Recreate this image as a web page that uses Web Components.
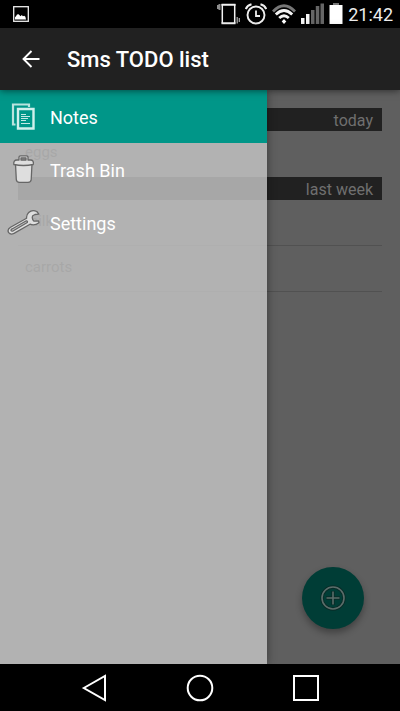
<!DOCTYPE html>
<html lang="en">
<head>
<meta charset="utf-8">
<meta name="viewport" content="width=device-width, initial-scale=1">
<title>Sms TODO list</title>
<style>
  html, body { margin: 0; min-height: 100%; }
  body { font-family: Roboto, "Liberation Sans", sans-serif; background: #000; color: #fff; }
</style>
</head>
<body>
<todo-app></todo-app>
<script>
const define = (name, html) => {
  const template = document.createElement('template');
  template.innerHTML = html;
  customElements.define(name, class extends HTMLElement {
    constructor() {
      super();
      this.attachShadow({ mode: 'open' }).append(template.content.cloneNode(true));
    }
  });
};

define('status-bar', `
<style>
  :host { display: flex; align-items: center; height: 28px; padding: 0 7px 0 12px; background: #000; color: #ededed; }
  svg { display: block; flex: none; }
  .picture { margin-right: auto; }
  .tray { display: flex; align-items: center; gap: 5px; }
  time { font-size: 18px; line-height: 28px; padding-top: 1px; }
</style>
<svg class="picture" width="18" height="28" viewBox="0 0 18 28"><rect x="1.7" y="6.7" width="14.6" height="14.6" fill="none" stroke="#eee" stroke-width="1.3"/><path d="M3 19.5v-2.3l1-.9 1-1.8 1.6-.3 1 1 .9 1 1.3-1.2 1.1 1.2 1.3-.4 1.2.9.6 2.8z" fill="#fff"/></svg>
<div class="tray">
  <svg width="23" height="28" viewBox="0 0 23 28"><path d="M4.500 4.700h14M4.500 23.300h14" stroke="#f2f2f2" stroke-width="2"/><path d="M5.300 4v19.500M17.700 4v19.500" stroke="#f2f2f2" stroke-width="1.500"/><path d="M2.500 4v6M.7 5v4" stroke="#8d8d8d" stroke-width="2"/><path d="M20.200 17v6.500M22.300 18v4" stroke="#a5a5a5" stroke-width="1.300"/></svg>
  <svg width="22" height="28" viewBox="0 0 22 28" fill="none" stroke="#eee"><circle cx="11" cy="15" r="8.500" stroke-width="1.900"/><path d="M11 10.500v5.500h4" stroke-width="1.800"/><path d="M.8 9Q2.300 5.300 6.500 4.200M21.200 9Q19.700 5.300 15.500 4.200" stroke-width="2"/></svg>
  <svg width="24" height="28" viewBox="0 0 24 28" fill="none" stroke-width="2.800"><path d="M1 11.500Q12 0 23 11.500" stroke="#777"/><path d="M3.800 14.500Q12 6.500 20.200 14.500" stroke="#f4f4f4"/><path d="M7.200 18Q12 13.500 16.800 18" stroke="#f4f4f4"/><path d="M12 19l2.300 2.500L12 24l-2.300-2.500z" fill="#fff"/></svg>
  <svg width="23" height="28" viewBox="0 0 23 28"><path d="M0 18h3.500v6H0zM5 14h3.500v10H5z" fill="#f5f5f5"/><path d="M10 10h3.500v14H10zM14.800 6h3.500v18h-3.500zM19.500 3.500H23V24h-3.500z" fill="#666"/></svg>
  <svg width="14" height="28" viewBox="0 0 14 28"><path d="M4 3h6v2H4z" fill="#777"/><path d="M.5 5h13v19H.5z" fill="#fff"/></svg>
  <time>21:42</time>
</div>`);

define('app-bar', `
<style>
  :host { display: flex; align-items: center; height: 62px; padding: 0 16px; background: #212121; box-shadow: 0 1px 7px rgba(0,0,0,.5); position: relative; z-index: 2; box-sizing: border-box; gap: 22px; }
  button { width: 29px; height: 40px; padding: 0; border: 0; background: none; display: grid; place-items: center; }
  h1 { margin: 0; padding-top: 2px; font-size: 22px; line-height: 28px; font-weight: 500; color: #fff; }
</style>
<button aria-label="Back"><svg width="18" height="18" viewBox="0 0 18 18" fill="none" stroke="#fff" stroke-width="1.900"><path d="M17.500 9H1.700M9.500 1L1.500 9l8 8"/></svg></button>
<h1><slot></slot></h1>`);

define('list-header', `
<style>
  :host { display: block; background: #212121; color: #6f6f6f; text-align: right; padding: 2px 9px 0; }
  h2 { margin: 0; font-size: 16px; line-height: 21px; font-weight: 400; }
</style>
<h2><slot></slot></h2>`);

define('todo-row', `
<style>
  :host { display: block; box-sizing: border-box; height: 46px; padding: 11px 7px; border-bottom: 1px solid #515151; font-size: 15px; line-height: 21px; color: #242424; }
  :host([last]) { border-color: transparent; }
</style>
<slot></slot>`);

define('add-button', `
<style>
  :host { display: block; }
  button { width: 62px; height: 62px; padding: 0; border: 0; border-radius: 50%; background: #003d36; display: grid; place-items: center; box-shadow: 0 4px 7px rgba(0,0,0,.32); }
</style>
<button aria-label="Add note"><svg width="26" height="26" viewBox="0 0 26 26" fill="none"><g stroke="#082b27" stroke-width="3.400"><circle cx="13" cy="13" r="11"/><path d="M13 6v14M6 13h14"/></g><g stroke="#5b6d6a" stroke-width="1.600"><circle cx="13" cy="13" r="11"/><path d="M13 6.500v13M6.500 13h13"/></g></svg></button>`);

define('drawer-item', `
<style>
  :host { display: block; }
  a { display: flex; align-items: center; gap: 10px; height: 53px; padding: 0 7px; color: #fff; text-decoration: none; font-size: 18px; line-height: 24px; }
  span { padding-top: 2px; }
  :host([active]) a { background: #009688; }
  ::slotted(svg) { display: block; flex: none; }
</style>
<a href="#"><slot name="icon"></slot><span><slot></slot></span></a>`);

define('nav-bar', `
<style>
  :host { display: flex; justify-content: center; align-items: center; gap: 66px; height: 47px; background: #000; }
  button { width: 40px; height: 40px; padding: 0; border: 0; background: none; display: grid; place-items: center; }
  svg { fill: none; stroke: #fff; stroke-width: 2; }
</style>
<button aria-label="Back"><svg width="28" height="28" viewBox="0 0 28 28"><path d="M3.800 14L25 1.900v24.200z"/></svg></button>
<button aria-label="Home"><svg width="28" height="28" viewBox="0 0 28 28"><circle cx="14" cy="14" r="12.300"/></svg></button>
<button aria-label="Recent apps"><svg width="28" height="28" viewBox="0 0 28 28"><path d="M2 2h24v24H2z"/></svg></button>`);

define('todo-app', `
<style>
  :host { display: grid; grid-template-rows: auto auto 1fr auto; min-height: 100vh; }
  main { display: grid; background: #5f5f5f; overflow: hidden; }
  main > * { grid-area: 1 / 1; }
  .list { padding: 18px; }
  add-button { place-self: end; margin: 0 36px 35px 0; }
  nav { width: 66.750%; background: rgba(196,196,196,.82); box-shadow: 0 0 9px rgba(0,0,0,.4); z-index: 1; clip-path: inset(0 -12px 0 0); }
</style>
<status-bar></status-bar>
<app-bar>Sms TODO list</app-bar>
<main>
  <section class="list">
    <list-header>today</list-header>
    <todo-row last>eggs</todo-row>
    <list-header>last week</list-header>
    <todo-row>milk</todo-row>
    <todo-row>carrots</todo-row>
  </section>
  <add-button></add-button>
  <nav aria-label="Main menu">
    <drawer-item active>
      <svg slot="icon" width="33" height="34" viewBox="0 0 33 34" fill="none"><path d="M8.500 24.500H6V4.500H22V7" stroke="#b9e3de" stroke-width="2.200"/><path d="M11 9h15.500v19.500H11z" stroke="#d0f0ec" stroke-width="2.400"/><path d="M14 14.500h5M14 16.500h9M14 18.500h7M14 20.500h5M14 23.500h9" stroke="#c5e9e5" stroke-width="1.200"/></svg>
      Notes
    </drawer-item>
    <drawer-item>
      <svg slot="icon" width="33" height="34" viewBox="0 0 33 34" fill="#dedede" stroke="#666" stroke-width="1.300" stroke-linejoin="round"><path d="M8.500 11h16.500l-.8 15.500Q24 29.300 21 29.300h-8.500Q9.500 29.300 9.300 26.500z"/><path d="M6.800 11.500Q6.300 7 10 7h2V4Q12 2.800 13.500 2.800h6Q21 2.800 21 4v3h2.500Q27 7 26.300 11.500Q16.500 13.500 6.800 11.500z"/><path d="M14 5h5v2h-5z" fill="#aaa"/></svg>
      Trash Bin
    </drawer-item>
    <drawer-item>
      <svg slot="icon" width="33" height="34" viewBox="0 0 33 34" fill="#dedede" stroke="#666" stroke-width="1.300" stroke-linejoin="round"><path d="M31.800 8.200L29.800 5.500Q25 3.500 21.700 6.500Q19.200 8.800 19.600 12.300L3.500 21.300Q-.2 23.600 1.700 26.700Q3.500 29 7 27.400L23 18.200Q27.500 20.200 32 16.800L31.600 14.800L27 15.200Q24.400 13 25.700 9.800L28 8.500z"/><path d="M5.500 22.700L19 15Q21 14.500 20.300 16.500L6.300 24.800Q3.800 25.600 4 24Q4.300 23.200 5.500 22.700z" fill="#c4c4c4"/></svg>
      Settings
    </drawer-item>
  </nav>
</main>
<nav-bar></nav-bar>`);
</script>
</body>
</html>
